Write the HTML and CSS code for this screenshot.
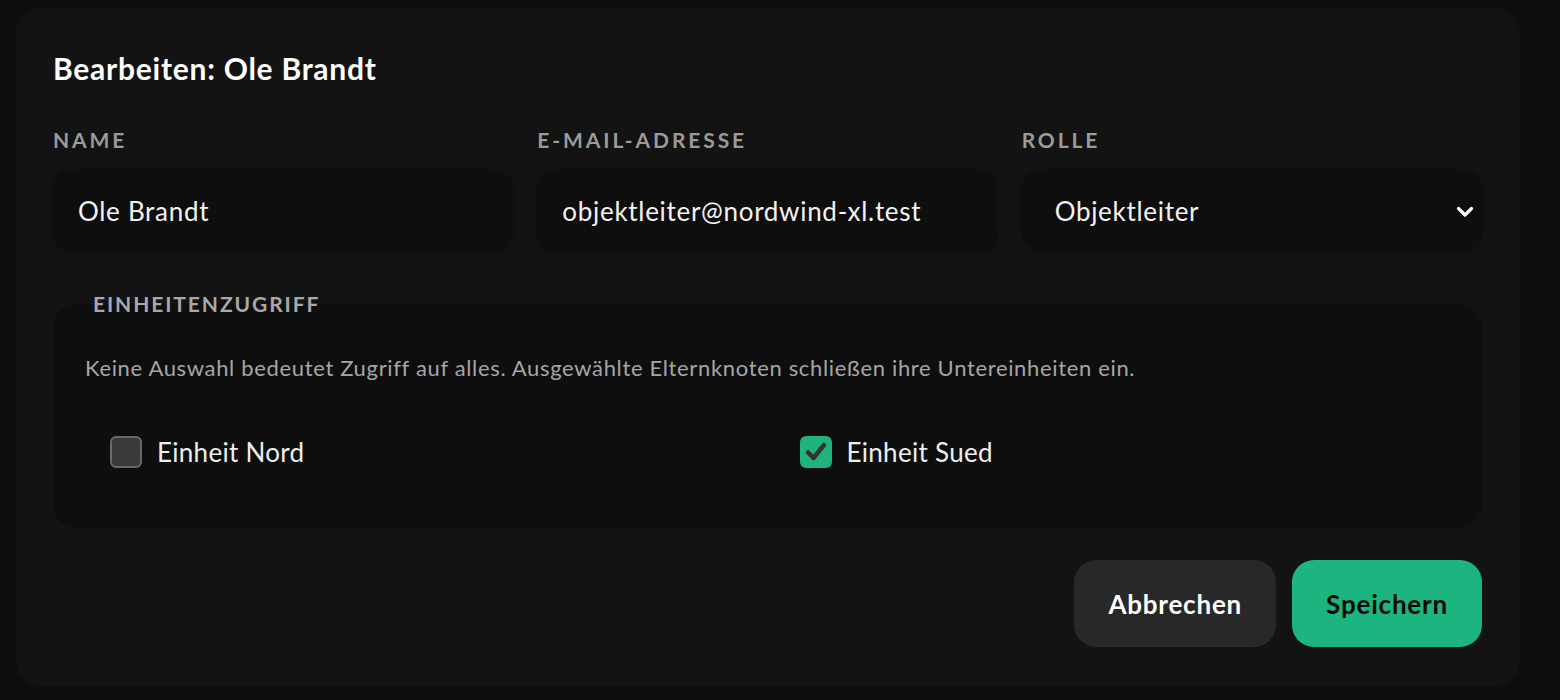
FILE: index.html
```html
<!DOCTYPE html>
<html lang="de">
<head>
<meta charset="utf-8">
<title>Bearbeiten: Ole Brandt</title>
<link rel="stylesheet" href="styles.css">
</head>
<body>
<main class="card">
  <h1 class="title">Bearbeiten: Ole Brandt</h1>
  <div class="fields">
    <label class="field">
      <span class="label">Name</span>
      <span class="input">Ole Brandt</span>
    </label>
    <label class="field">
      <span class="label">E-Mail-Adresse</span>
      <span class="input">objektleiter@nordwind-xl.test</span>
    </label>
    <label class="field">
      <span class="label">Rolle</span>
      <span class="input select">Objektleiter
        <svg class="chevron" width="18" height="12" viewBox="0 0 18 12"><path d="M2.5 2.5 L9 9 L15.5 2.5" fill="none" stroke="#fff" stroke-width="3.2" stroke-linecap="round" stroke-linejoin="round"/></svg>
      </span>
    </label>
  </div>
  <fieldset class="units">
    <legend class="legend">Einheitenzugriff</legend>
    <p class="hint">Keine Auswahl bedeutet Zugriff auf alles. Ausgewählte Elternknoten schließen ihre Untereinheiten ein.</p>
    <div class="checks">
      <label class="check"><span class="box"></span>Einheit Nord</label>
      <label class="check"><span class="box on"><svg width="24" height="22" viewBox="0 0 24 22"><path d="M4 11.5 L9.5 17 L20 4" fill="none" stroke="#333333" stroke-width="4.5" stroke-linecap="round" stroke-linejoin="round"/></svg></span>Einheit Sued</label>
    </div>
  </fieldset>
  <div class="actions">
    <button class="btn cancel" type="button">Abbrechen</button>
    <button class="btn save" type="button">Speichern</button>
  </div>
</main>
</body>
</html>
```

FILE: styles.css
```css
html, body {
  margin: 0;
  padding: 0;
  background: #0e0e0e;
  height: 100%;
  overflow: hidden;
}
body {
  font-family: "Lato", "Liberation Sans", sans-serif;
  color: #fff;
}
.card {
  margin: 8px 40px 0 16px;
  background: #131313;
  border-radius: 24px;
  padding: 40px 38px 39px 37px;
  box-sizing: border-box;
}
.title {
  margin: 0;
  font-size: 30px;
  line-height: 40px;
  font-weight: 700;
  letter-spacing: 0.75px;
}
.fields {
  margin-top: 40px;
  display: grid;
  grid-template-columns: repeat(3, 1fr);
  gap: 24px;
}
.field {
  display: flex;
  flex-direction: column;
  gap: 18px;
}
.label {
  font-size: 21px;
  line-height: 24px;
  font-weight: 700;
  letter-spacing: 2.9px;
  text-transform: uppercase;
  color: #9b9b9b;
}
.input {
  position: relative;
  height: 82px;
  box-sizing: border-box;
  display: flex;
  align-items: center;
  padding: 0 25px;
  background: #0e0e0e;
  border-radius: 20px;
  box-shadow: 0 0 6px rgba(0,0,0,0.25);
  font-size: 26px;
  letter-spacing: 0.7px;
  color: #f2f2f2;
}
.select { padding-left: 33px; }
.chevron {
  position: absolute;
  right: 8px;
  top: 36px;
}
.units {
  margin: 40px 0 0;
  border: none;
  background: #0e0e0e;
  border-radius: 24px;
  padding: 40px 32px 60px;
  min-width: 0;
}
.legend {
  padding: 0;
  margin-left: 8px;
  font-size: 21px;
  line-height: 24px;
  font-weight: 700;
  letter-spacing: 1.9px;
  text-transform: uppercase;
  color: #a8a8a8;
}
.hint {
  margin: 0;
  font-size: 22px;
  line-height: 24px;
  letter-spacing: 0.66px;
  color: #a6a6a6;
}
.checks {
  margin-top: 56px;
  padding: 0 25px;
  display: grid;
  grid-template-columns: 1fr 1fr;
  gap: 64px;
}
.check {
  display: flex;
  align-items: center;
  gap: 15px;
  font-size: 26px;
  line-height: 32px;
  letter-spacing: 0.3px;
  color: #eeeeee;
}
.box {
  width: 32px;
  height: 32px;
  box-sizing: border-box;
  border-radius: 6px;
  background: #3b3b3b;
  border: 2px solid #6a6a6a;
  display: flex;
  align-items: center;
  justify-content: center;
}
.box.on {
  background: #1fb27c;
  border-color: #1fb27c;
}
.actions {
  margin-top: 32px;
  display: flex;
  justify-content: flex-end;
  gap: 16px;
}
.btn {
  height: 87px;
  padding: 0 34px;
  border: none;
  border-radius: 22px;
  font-family: inherit;
  font-size: 26px;
  letter-spacing: 0.8px;
  font-weight: 700;
}
.cancel {
  background: #282828;
  color: #fff;
}
.save {
  background: #1db57f;
  color: #0b0b0b;
}
```
